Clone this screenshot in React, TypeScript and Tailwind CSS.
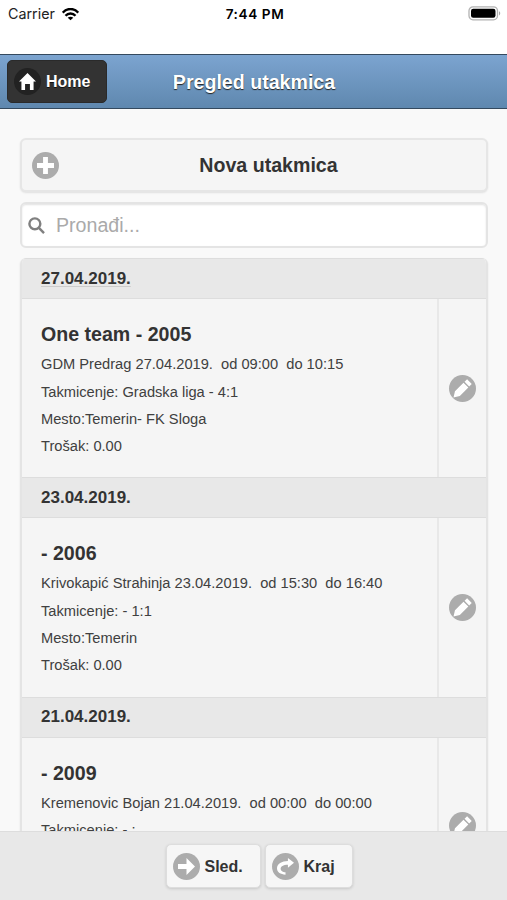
import type { ReactNode } from "react";

const PATHS = {
  home: "M7 0L0 7h2v7h3V9h4v5h3V7h2z",
  plus: "M14 5H9V0H5v5H0v4h5v5h4V9h5z",
  edit: "M.8 9.200L-.4 14.400l5.200-1.200L11.800 6.200 7.800 2.200zM10.800-.6L8.700 1.500l3.800 3.800 2.100-2.100z",
  next: "M7 0v5H0v4h7v5l7-7z",
  forward: "M14 4L9 0v2.500C4 2.500 0 5 0 8.500 0 12 3 13.500 7 13.800v-2c-2 0-4-1-4-3.100C3 7 5 5.500 9 5.500V8z",
};

function Disc({ icon, dark = false }: { icon: keyof typeof PATHS; dark?: boolean }) {
  return (
    <span
      className={`flex h-[27px] w-[27px] shrink-0 items-center justify-center rounded-full ${dark ? "bg-[#222]" : "bg-[#acacac]"}`}
    >
      <svg className="h-[17px] w-[17px] overflow-visible" viewBox="0 0 14 14" fill="#fff">
        <path d={PATHS[icon]} />
      </svg>
    </span>
  );
}

type Match = { date: string; title: string; lines: string[]; height: string; underlined?: boolean };

const matches: Match[] = [
  {
    date: "27.04.2019.",
    title: "One team - 2005",
    lines: ["GDM Predrag 27.04.2019.  od 09:00  do 10:15", "Takmicenje: Gradska liga - 4:1", "Mesto:Temerin- FK Sloga", "Trošak: 0.00"],
    height: "h-[178px]",
    underlined: true,
  },
  {
    date: "23.04.2019.",
    title: "- 2006",
    lines: ["Krivokapić Strahinja 23.04.2019.  od 15:30  do 16:40", "Takmicenje: - 1:1", "Mesto:Temerin", "Trošak: 0.00"],
    height: "h-[178.6px]",
  },
  {
    date: "21.04.2019.",
    title: "- 2009",
    lines: ["Kremenovic Bojan 21.04.2019.  od 00:00  do 00:00", "Takmicenje: - :"],
    height: "h-[176px]",
  },
];

function MatchItem({ match }: { match: Match }) {
  return (
    <li>
      <div className="flex h-[41px] items-center border-y border-[#dddddd] bg-[#e8e8e8] pl-[19px] text-[17px] font-bold">
        <span className={match.underlined ? "underline decoration-[#ccc] decoration-1 underline-offset-2" : ""}>{match.date}</span>
      </div>
      <div className={`flex bg-[#f5f5f5] ${match.height}`}>
        <div className="min-w-0 flex-1 whitespace-pre border-r-2 border-[#e8e8e8] pt-[22px] pl-[19px]">
          <h2 className="mb-[4.4px] text-[19.6px] leading-[26px] font-bold">{match.title}</h2>
          {match.lines.map((line) => (
            <p key={line} className="text-[14.66px] leading-[27.2px] text-[#404040]">{line}</p>
          ))}
        </div>
        <div className="flex w-[47px] items-center justify-center">
          <Disc icon="edit" />
        </div>
      </div>
    </li>
  );
}

function FooterButton({ icon, width, children }: { icon: "next" | "forward"; width: string; children: ReactNode }) {
  return (
    <button
      className={`flex h-[44px] items-center gap-[5px] rounded-[5px] border border-[#dddddd] bg-[#f6f6f6] pl-[6px] text-[16px] font-bold shadow-[0_1px_3px_rgba(0,0,0,0.15)] ${width}`}
    >
      <Disc icon={icon} />
      <span className="pt-px">{children}</span>
    </button>
  );
}

export default function App() {
  return (
    <div className="flex h-[900px] w-[507px] flex-col overflow-hidden bg-[#f9f9f9] font-['Liberation_Sans',Arial,sans-serif] text-[#333]">
      <div className="grid h-[54px] shrink-0 grid-cols-3 items-start bg-white pt-[5px] font-['Inter',sans-serif] text-[14px] leading-[18px] text-[#222]">
        <div className="flex items-center gap-[7px] pl-[8px]">
          <span className="text-[14.3px]">Carrier</span>
          <svg className="h-[13px] w-[17px]" viewBox="0 0 17 13" fill="none" stroke="#000" strokeWidth="2.4">
            <path d="M.8 4.6C5-.2 12-.2 16.200 4.600M3.500 7.700c2.800-3 7.200-3 10 0" />
            <path d="M8.500 12.300L5.700 9.800c1.600-1.500 4-1.500 5.600 0z" fill="#000" stroke="none" />
          </svg>
        </div>
        <span className="pl-[3px] text-center text-[13.6px] font-semibold tracking-[0.6px] text-black">7:44 PM</span>
        <div className="flex justify-end pt-[1px] pr-[6px]">
          <svg className="h-[15px] w-[33px]" viewBox="0 0 33 15">
            <rect x="1" y=".8" width="28.500" height="13" rx="4" fill="#fff" stroke="#b2b2b2" strokeWidth="1.300" />
            <rect x="3" y="2.800" width="24.500" height="9" rx="2.200" fill="#000" />
            <path d="M31 5.200c1.700.6 1.700 3.600 0 4.200z" fill="#aaa" />
          </svg>
        </div>
      </div>

      <header className="grid h-[55px] shrink-0 grid-cols-[107px_1fr_107px] items-center border-y border-[#34495e] bg-linear-to-b from-[#7ca4d0] to-[#5f88af]">
        <button className="ml-[7px] flex h-[43px] w-[100px] items-center gap-[5px] rounded-[5px] border border-[#2a2a2a] bg-[#333] pl-[6px] text-[16px] font-bold text-white [text-shadow:0_1px_0_#111]">
          <Disc icon="home" dark />
          <span className="pt-px">Home</span>
        </button>
        <h1 className="pt-[2px] pl-px text-center text-[19.6px] font-bold text-white [text-shadow:0_1px_1px_#222]">Pregled utakmica</h1>
      </header>

      <main className="flex min-h-0 flex-1 flex-col overflow-hidden pt-[29px] pr-[19px] pl-[20px]">
        <button className="grid h-[54px] shrink-0 grid-cols-[27px_1fr] items-center rounded-[6px] border-2 border-[#e6e6e6] bg-[#f5f5f5] pl-[10px] text-[19.6px] font-bold shadow-[0_1px_2px_rgba(0,0,0,0.1)]">
          <Disc icon="plus" />
          <span className="pt-[2px] pr-[8px]">Nova utakmica</span>
        </button>
        <label className="mt-[10px] flex h-[46px] shrink-0 items-center gap-[11px] rounded-[6px] border-2 border-[#e4e4e4] bg-white pl-[6px] shadow-[inset_0_1px_2px_rgba(0,0,0,0.12)]">
          <svg className="h-[17px] w-[17px]" viewBox="0 0 14 14" fill="none" stroke="#808080" strokeWidth="2">
            <circle cx="5.650" cy="5.650" r="4.500" />
            <path d="M9 9l4.200 4.200" />
          </svg>
          <input className="min-w-0 flex-1 bg-transparent pt-[2px] text-[19.6px] outline-none placeholder:text-[#aaa]" placeholder="Pronađi..." />
        </label>
        <ul className="mt-[10px] shrink-0 overflow-hidden rounded-[6px] border-x-2 border-[#e4e4e4] shadow-[0_1px_2px_rgba(0,0,0,0.1)]">
          {matches.map((match) => (
            <MatchItem key={match.date} match={match} />
          ))}
        </ul>
      </main>

      <footer className="flex h-[69px] shrink-0 items-start justify-center gap-[4px] border-t border-[#dddddd] bg-[#e8e8e8] pt-[12px] pl-[11px]">
        <FooterButton icon="next" width="w-[95px]">Sled.</FooterButton>
        <FooterButton icon="forward" width="w-[88px]">Kraj</FooterButton>
      </footer>
    </div>
  );
}
